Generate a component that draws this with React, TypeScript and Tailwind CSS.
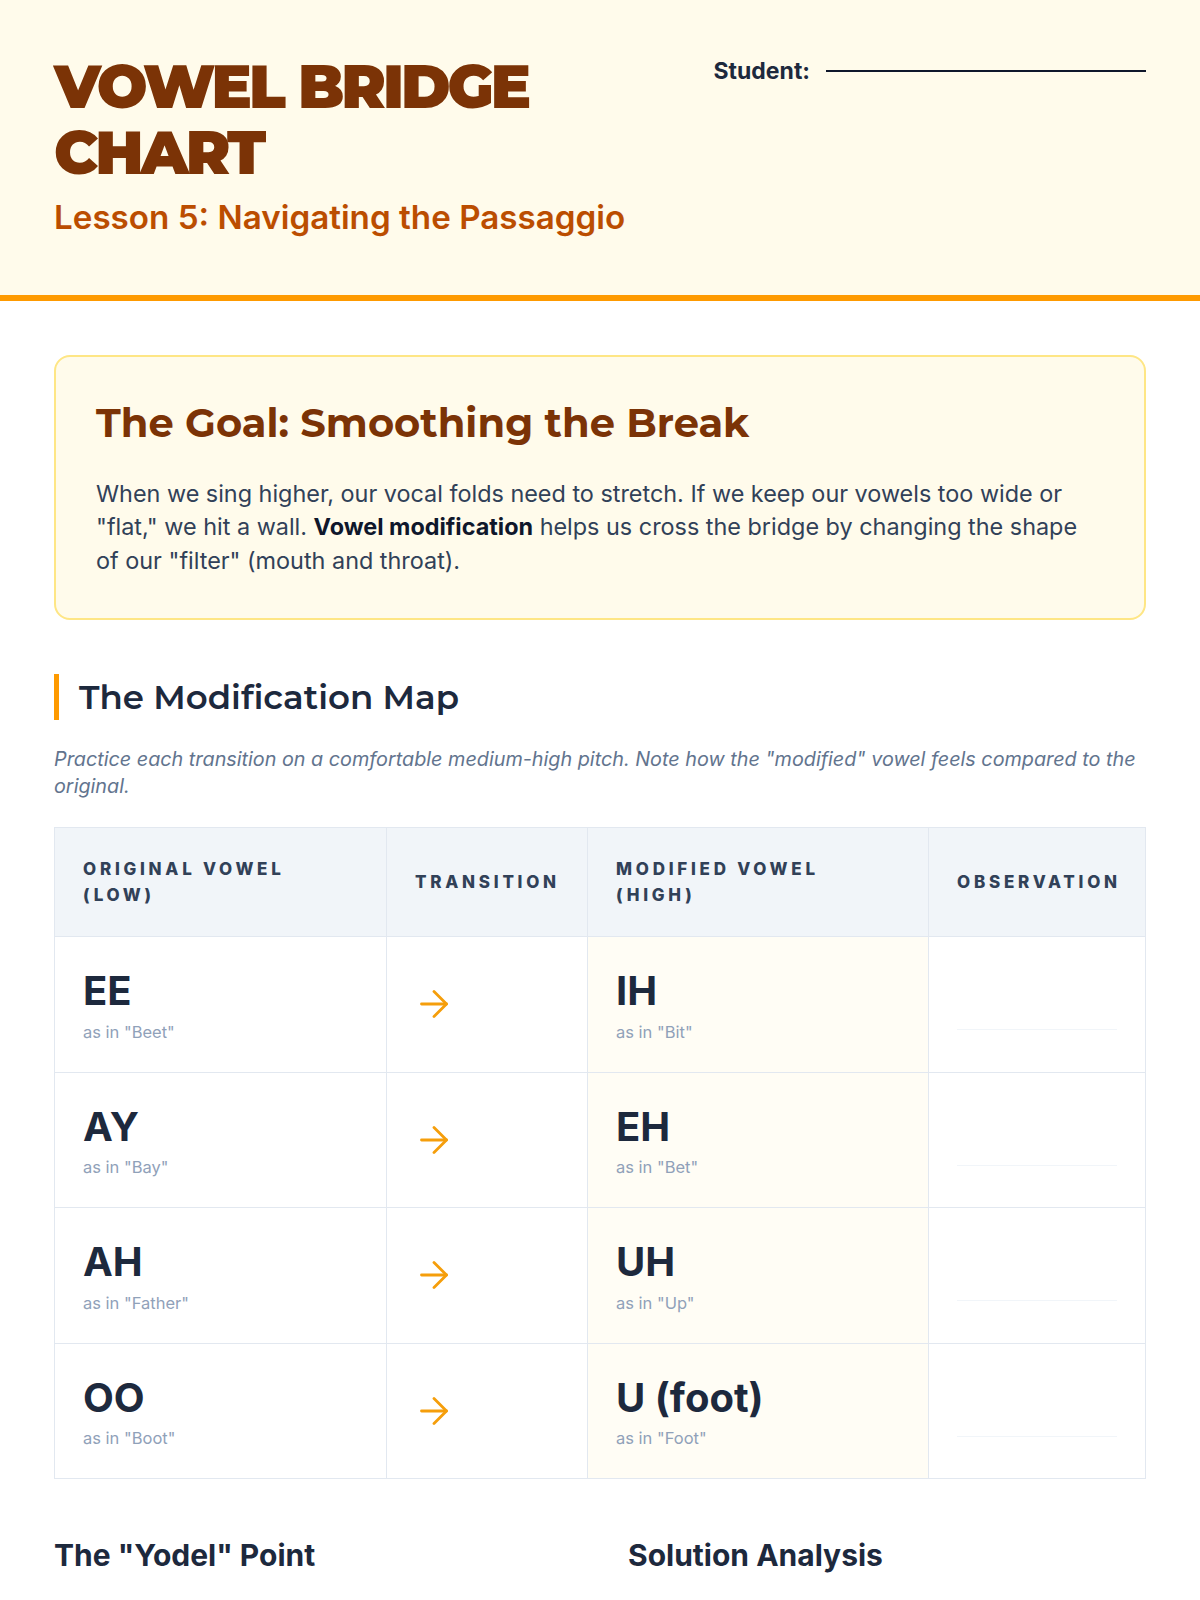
const ROWS = [
  { from: 'EE', fromHint: 'as in "Beet"', to: 'IH', toHint: 'as in "Bit"' },
  { from: 'AY', fromHint: 'as in "Bay"', to: 'EH', toHint: 'as in "Bet"' },
  { from: 'AH', fromHint: 'as in "Father"', to: 'UH', toHint: 'as in "Up"' },
  { from: 'OO', fromHint: 'as in "Boot"', to: 'U (foot)', toHint: 'as in "Foot"' },
];

const DISPLAY = "font-['Montserrat','Lato','Open_Sans',sans-serif]";

const Arrow = () => (
  <svg
    width="28"
    height="28"
    viewBox="0 0 28 28"
    fill="none"
    stroke="#f59e0b"
    strokeWidth="2.8"
    strokeLinecap="round"
    strokeLinejoin="round"
    className="ml-[5px]"
  >
    <path d="M1.5 14h25" />
    <path d="M14 1.5l12.5 12.5-12.5 12.5" />
  </svg>
);

const Vowel = ({ name, hint }: { name: string; hint: string }) => (
  <div className="pt-[2px]">
    <div className="text-[40px] font-bold leading-[1.2] text-slate-800">{name}</div>
    <div className="mt-[4.5px] text-[16.5px] leading-6 text-slate-400">{hint}</div>
  </div>
);

export default function App() {
  return (
    <div className="min-h-screen bg-white font-['Inter','Noto_Sans',sans-serif] text-slate-700">
      <header className="flex items-start justify-between border-b-[6px] border-amber-500 bg-amber-50 px-[54px] pt-[54px] pb-[56px]">
        <div>
          <h1 className={`${DISPLAY} text-[60px] font-black leading-[1.1] tracking-[-0.05em] text-amber-900`}>
            VOWEL BRIDGE
            <br />
            CHART
          </h1>
          <p className="mt-[10px] text-[33.2px] font-semibold leading-[1.3] text-amber-700">
            Lesson 5: Navigating the Passaggio
          </p>
        </div>
        <div className="mt-[1px] flex items-center gap-4">
          <span className="text-[23px] font-bold leading-8 text-slate-800">Student:</span>
          <span className="block w-80 border-b-2 border-slate-900" />
        </div>
      </header>

      <main className="px-[54px] pt-[54px] pb-16">
        <section className="rounded-2xl border-2 border-amber-200 bg-amber-50 pt-[42px] pr-[46px] pb-[41px] pl-10">
          <h2 className={`${DISPLAY} text-[40px] font-bold leading-[1.2] text-amber-900`}>
            The Goal: Smoothing the Break
          </h2>
          <p className="mt-[30px] text-[23.4px] leading-[33.3px] text-slate-700">
            When we sing higher, our vocal folds need to stretch. If we keep our vowels too wide or
            "flat," we hit a wall. <strong className="font-bold text-slate-900">Vowel modification</strong>{' '}
            helps us cross the bridge by changing the shape of our "filter" (mouth and throat).
          </p>
        </section>

        <section className="mt-[54px]">
          <h2
            className={`${DISPLAY} border-l-[5px] border-amber-500 pl-5 text-[34px] font-semibold leading-[46px] text-slate-800`}
          >
            The Modification Map
          </h2>
          <p className="mt-[26px] text-[19.8px] italic leading-[26.5px] text-slate-500">
            Practice each transition on a comfortable medium-high pitch. Note how the "modified" vowel feels
            compared to the original.
          </p>

          <table className="mt-7 w-full table-fixed border-collapse border border-slate-200">
            <colgroup>
              <col className="w-[332px]" />
              <col className="w-[201px]" />
              <col className="w-[341px]" />
              <col />
            </colgroup>
            <thead>
              <tr className="bg-slate-100 text-left text-[17px] leading-[26px] tracking-[0.22em] text-slate-700">
                <th className="border border-slate-200 px-7 py-7 font-extrabold">
                  ORIGINAL VOWEL
                  <br />
                  (LOW)
                </th>
                <th className="border border-slate-200 px-7 py-7 font-extrabold">TRANSITION</th>
                <th className="border border-slate-200 px-7 py-7 font-extrabold">
                  MODIFIED VOWEL
                  <br />
                  (HIGH)
                </th>
                <th className="border border-slate-200 px-7 py-7 font-extrabold">OBSERVATION</th>
              </tr>
            </thead>
            <tbody>
              {ROWS.map((row) => (
                <tr key={row.from}>
                  <td className="border border-slate-200 px-7 py-7 align-middle">
                    <Vowel name={row.from} hint={row.fromHint} />
                  </td>
                  <td className="border border-slate-200 px-7 py-7 align-middle">
                    <Arrow />
                  </td>
                  <td className="border border-slate-200 bg-[#fffdf5] px-7 py-7 align-middle">
                    <Vowel name={row.to} hint={row.toHint} />
                  </td>
                  <td className="border border-slate-200 px-7 py-7 align-top">
                    <div className="h-[65px] border-b border-slate-100" />
                  </td>
                </tr>
              ))}
            </tbody>
          </table>
        </section>

        <section className="mt-[58px] grid grid-cols-2 gap-14">
          <h3 className="text-[30px] font-bold leading-9 text-slate-800">The "Yodel" Point</h3>
          <h3 className="text-[30px] font-bold leading-9 text-slate-800">Solution Analysis</h3>
        </section>
      </main>
    </div>
  );
}
